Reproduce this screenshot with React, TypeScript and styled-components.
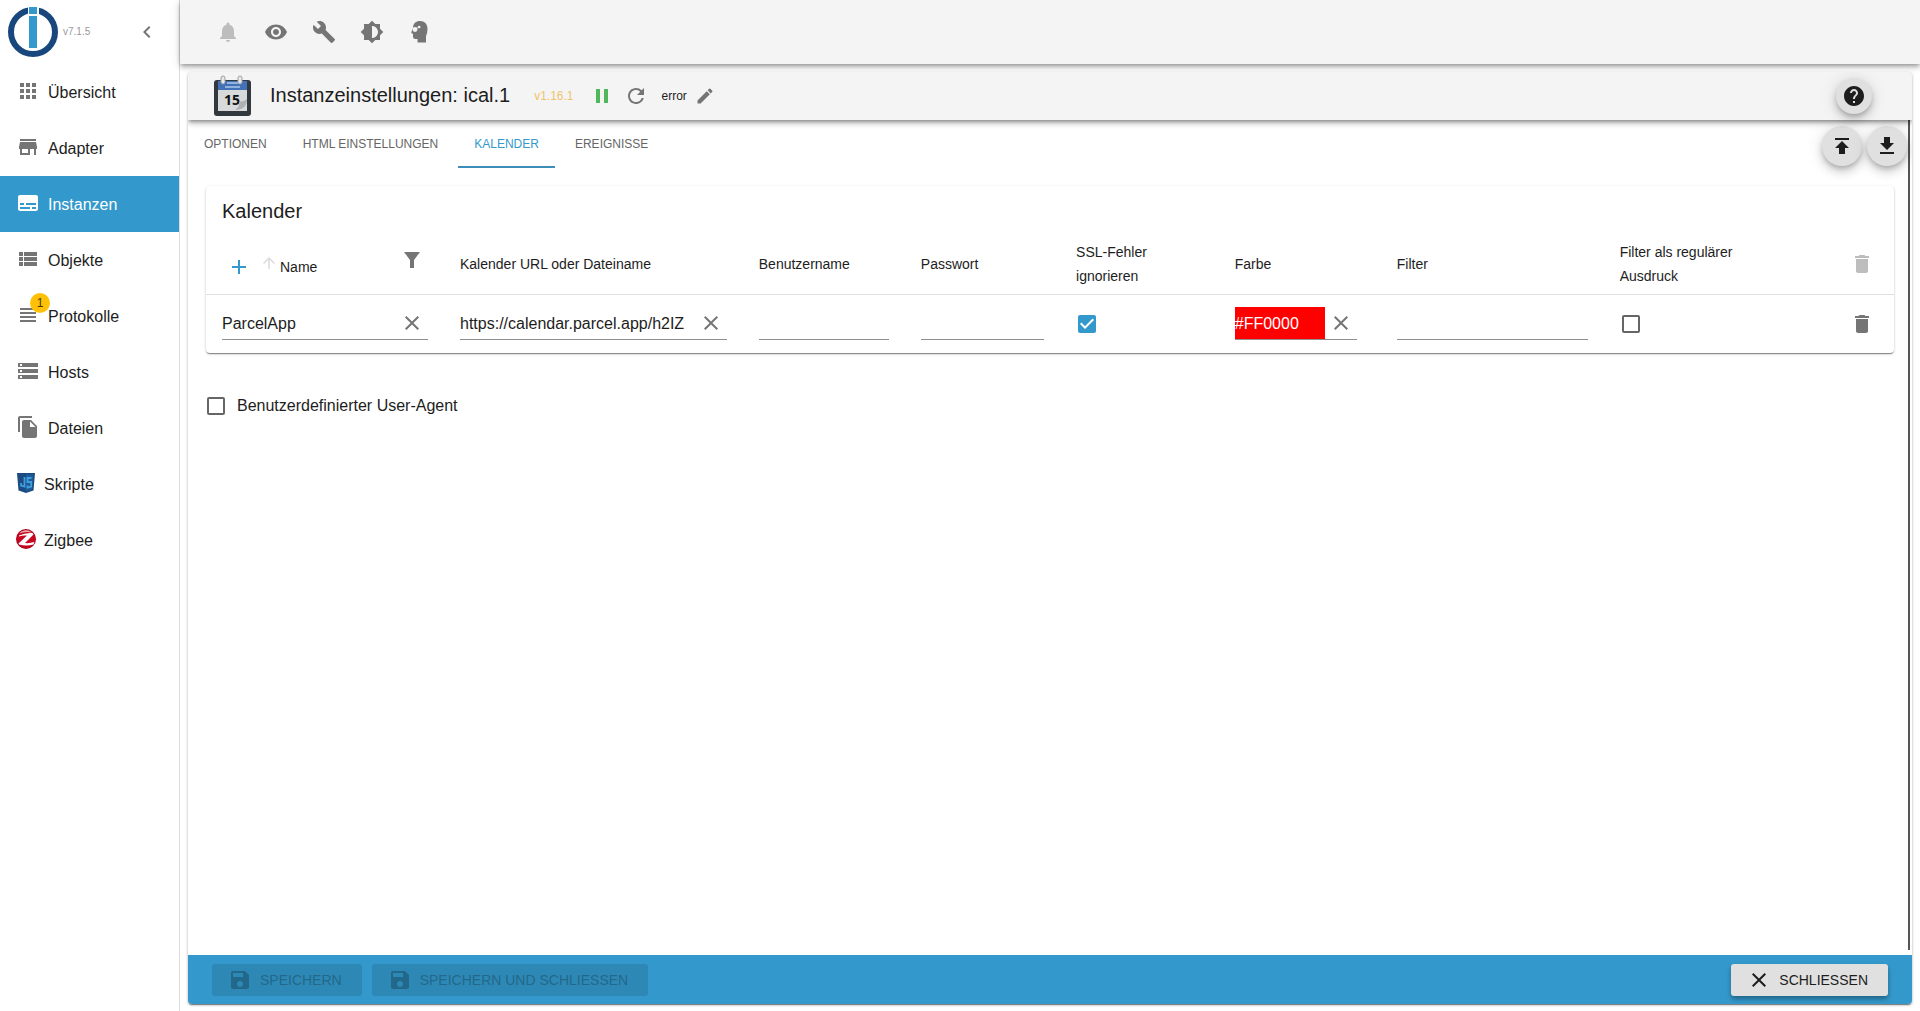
import React from 'react';
import styled, { createGlobalStyle } from 'styled-components';
import {
  MdApps, MdStore, MdSubtitles, MdViewList, MdViewHeadline, MdStorage, MdFileCopy,
  MdChevronLeft, MdNotifications, MdVisibility, MdBuild, MdBrightness6, MdPause, MdRefresh,
  MdEdit, MdHelp, MdPublish, MdGetApp, MdAdd, MdArrowUpward, MdClose, MdDelete, MdSave,
} from 'react-icons/md';

const Global = createGlobalStyle`
  *, *::before, *::after { box-sizing: border-box; }
  body { margin: 0; background: #fff; color: #1d1d1d; font: 16px/24px "Liberation Sans", Arial, sans-serif; }
  button, input { font: inherit; color: inherit; }
  button { border: 0; padding: 0; background: none; cursor: pointer; }
  svg { display: block; flex: none; }
`;

const Page = styled.div`
  display: flex;
  height: 100vh;
  min-height: 600px;
  overflow: hidden;
`;

const Sidebar = styled.aside`
  width: 180px;
  flex: none;
  border-right: 1px solid #dcdcdc;
`;
const Brand = styled.div`
  height: 64px;
  display: flex;
  align-items: center;
  padding: 0 20px 0 8px;
`;
const Version = styled.span`
  flex: 1;
  margin-left: 5px;
  font-size: 10px;
  color: #9a9a9a;
`;
const PlainButton = styled.button`
  display: inline-flex;
  align-items: center;
  justify-content: center;
  color: #757575;
  &:disabled { color: #bdbdbd; }
`;
const NavLink = styled.a<{ $active?: boolean }>`
  height: 56px;
  display: flex;
  align-items: center;
  gap: 8px;
  padding: 2px 0 0 16px;
  text-decoration: none;
  color: ${p => (p.$active ? '#fff' : '#1d1d1d')};
  background: ${p => (p.$active ? '#3399cc' : 'transparent')};
`;
const NavIcon = styled.span<{ $active?: boolean }>`
  position: relative;
  padding-bottom: 5px;
  color: ${p => (p.$active ? '#fff' : '#757575')};
`;
const Badge = styled.span`
  position: absolute;
  top: -10px;
  right: -10px;
  width: 20px;
  height: 20px;
  border-radius: 10px;
  background: #ffc107;
  color: #4a3a00;
  font-size: 12px;
  line-height: 20px;
  text-align: center;
`;

const Main = styled.main`
  flex: 1;
  min-width: 0;
  display: flex;
  flex-direction: column;
`;
const TopBar = styled.header`
  height: 64px;
  flex: none;
  display: flex;
  align-items: center;
  gap: 24px;
  padding-left: 36px;
  background: #f4f4f4;
  box-shadow: 0 2px 4px -1px rgba(0,0,0,.3), 0 4px 5px rgba(0,0,0,.14), 0 1px 10px rgba(0,0,0,.12);
`;
const Panel = styled.section`
  flex: 1;
  min-height: 0;
  margin: 8px 8px 7px;
  display: flex;
  flex-direction: column;
  border-radius: 4px;
  overflow: hidden;
  box-shadow: 0 2px 1px -1px rgba(0,0,0,.3), 0 1px 1px rgba(0,0,0,.14), 0 1px 3px rgba(0,0,0,.3);
`;
const PanelHead = styled.div`
  position: relative;
  height: 48px;
  flex: none;
  display: flex;
  align-items: center;
  padding: 0 40px 0 24px;
  background: #f4f4f4;
  box-shadow: 0 2px 4px -1px rgba(0,0,0,.4), 0 4px 5px rgba(0,0,0,.14), 0 1px 10px rgba(0,0,0,.12);
`;
const Title = styled.h1`
  margin: 0 24px 0 16px;
  padding-bottom: 2px;
  font-size: 20px;
  line-height: 32px;
  font-weight: 400;
`;
const InstanceVersion = styled.span`
  margin-right: 16px;
  font-size: 12px;
  color: #f0c46c;
`;
const HeadTools = styled.div`
  flex: 1;
  display: flex;
  align-items: center;
  gap: 10px;
`;
const LogLevel = styled.span`
  display: flex;
  align-items: center;
  gap: 8px;
  margin-left: 4px;
  font-size: 12px;
`;
const Fab = styled.button<{ $small?: boolean }>`
  width: ${p => (p.$small ? 36 : 40)}px;
  height: ${p => (p.$small ? 36 : 40)}px;
  border-radius: 50%;
  background: #e0e0e0;
  color: #1d1d1d;
  display: flex;
  align-items: center;
  justify-content: center;
  box-shadow: 0 3px 5px -1px rgba(0,0,0,.2), 0 6px 10px rgba(0,0,0,.14), 0 1px 18px rgba(0,0,0,.12);
`;

const Body = styled.div`
  flex: 1;
  min-height: 0;
  margin: 0 2px 5px 0;
  border-right: 2px solid #555;
`;
const TabRow = styled.div`
  display: flex;
  justify-content: space-between;
  height: 48px;
`;
const Tabs = styled.div`
  display: flex;
  gap: 4px;
`;
const Tab = styled.button<{ $active?: boolean }>`
  padding: 2px 16px 0;
  font-size: 12px;
  color: ${p => (p.$active ? '#3399cc' : '#666')};
  border-bottom: 2px solid ${p => (p.$active ? '#3d8fb9' : 'transparent')};
`;
const FabPair = styled.div`
  display: flex;
  align-items: center;
  gap: 5px;
  padding: 3px 1px 0 0;
`;
const Content = styled.div`
  padding: 18px 14px 0 18px;
`;
const Card = styled.section`
  border-radius: 4px;
  box-shadow: 0 2px 1px -1px rgba(0,0,0,.3), 0 1px 1px rgba(0,0,0,.14), 0 1px 3px rgba(0,0,0,.2);
`;
const CardTitle = styled.h2`
  margin: 0;
  padding: 9px 16px 7px;
  font-size: 20px;
  line-height: 32px;
  font-weight: 400;
`;
const Grid = styled.table`
  width: 100%;
  table-layout: fixed;
  border-collapse: collapse;
`;
const Col = styled.col<{ $w?: string }>`
  width: ${p => p.$w ?? 'auto'};
`;
const Th = styled.th`
  height: 60px;
  padding: 0 16px;
  text-align: left;
  font-size: 14px;
  line-height: 24px;
  font-weight: 400;
  border-bottom: 1px solid #e0e0e0;
  &:last-child { padding-right: 20px; }
`;
const Td = styled.td`
  height: 59px;
  padding: 0 16px;
  &:last-child { padding-right: 20px; }
`;
const NameHead = styled.div`
  display: flex;
  align-items: center;
  padding: 6px 0 0 5px;
`;
const NameLabel = styled.span`
  flex: 1;
  margin-left: 2px;
`;
const SortArrow = styled.span`
  margin: -8px 0 0 9px;
  color: #dadada;
`;
const FilterButton = styled(PlainButton)`
  margin: -14px 4px 0 0;
`;
const RightButton = styled(PlainButton)`
  display: flex;
  margin-left: auto;
`;
const Field = styled.div<{ $inset?: boolean }>`
  display: flex;
  align-items: center;
  height: 33px;
  margin-right: ${p => (p.$inset ? 8 : 0)}px;
  border-bottom: 1px solid #8f8f8f;
`;
const Input = styled.input<{ $fill?: string }>`
  flex: 1;
  min-width: 0;
  height: 32px;
  border: 0;
  outline: 0;
  padding: 1px 0 0;
  background: ${p => p.$fill ?? 'transparent'};
  color: ${p => (p.$fill ? '#fff' : 'inherit')};
`;
const ClearButton = styled(PlainButton)<{ $snug?: boolean }>`
  padding: ${p => (p.$snug ? '0 4px' : '0 4px 0 14px')};
`;
const Check = styled.input`
  appearance: none;
  display: block;
  flex: none;
  width: 18px;
  height: 18px;
  margin: 0;
  border: 2px solid #666;
  border-radius: 2px;
  background-color: transparent;
  ${Td} & { margin: 0 2px; }
  &:checked {
    border-color: #3399cc;
    background: #3399cc url("data:image/svg+xml,%3Csvg xmlns='http://www.w3.org/2000/svg' viewBox='3 3 18 18'%3E%3Cpath fill='white' d='M10 17l-5-5 1.41-1.41L10 14.17l7.59-7.59L19 8z'/%3E%3C/svg%3E") center / 18px 18px no-repeat;
  }
`;
const AgentLabel = styled.label`
  display: flex;
  align-items: center;
  gap: 12px;
  padding: 41px 0 0 1px;
`;

const Footer = styled.footer`
  height: 49px;
  flex: none;
  display: flex;
  align-items: center;
  gap: 10px;
  padding: 0 24px;
  background: #3399cc;
`;
const FooterButton = styled.button`
  height: 32px;
  display: flex;
  align-items: center;
  gap: 8px;
  padding: 0 20px 0 16px;
  border-radius: 3px;
  font-size: 14px;
  background: #e0e0e0;
  color: #1d1d1d;
  box-shadow: 0 3px 5px rgba(0,0,0,.35);
  &:disabled { background: #2e88b5; color: #22688b; box-shadow: none; }
`;
const Spacer = styled.span`
  flex: 1;
`;

const Logo = () => (
  <svg width="50" height="50" viewBox="0 0 50 50" aria-hidden="true">
    <circle cx="25" cy="25" r="22" fill="none" stroke="#17477c" strokeWidth="6" />
    <rect x="20" y="0" width="11" height="10" fill="#fff" />
    <rect x="21" y="0" width="8" height="7" fill="#3399cc" />
    <rect x="21" y="9" width="8" height="32" fill="#3399cc" />
  </svg>
);

const HeadIcon = () => (
  <svg width="24" height="24" viewBox="0 0 24 24" aria-hidden="true">
    <path fill="currentColor" d="M12 1C8 1 5 3.500 5 8L3.200 12.500Q3 13.500 5 13.700V17Q5 19 7.500 19H9.500V22.500H18V16Q19.500 13 19.500 8.500C19.500 4 16.500 1 12 1Z" />
    <path d="M7 9.500L11 7" stroke="#f4f4f4" strokeWidth="1" />
    <circle cx="7" cy="9.500" r="2.400" fill="#f4f4f4" />
    <circle cx="11.200" cy="7" r="1.300" fill="#f4f4f4" />
  </svg>
);

const Funnel = () => (
  <svg width="24" height="24" viewBox="0 0 24 24" fill="currentColor" aria-hidden="true">
    <path d="M4 4h16l-6 8v8h-4v-8z" />
  </svg>
);

const CalendarIcon = () => (
  <svg width="42" height="42" viewBox="0 0 42 42" aria-hidden="true">
    <rect x="2" y="5" width="37" height="36" rx="3" fill="#31393e" />
    <rect x="6" y="6" width="29" height="30" fill="#d8d9db" />
    <rect x="6" y="6" width="29" height="9" fill="#4271b7" />
    <path d="M15 8h12M13 12h15" stroke="#8fb2df" strokeWidth="2" />
    <rect x="9" y="1" width="4" height="8" rx="2" fill="#e7e8e9" stroke="#9aa0a4" />
    <rect x="26" y="1" width="4" height="8" rx="2" fill="#e7e8e9" stroke="#9aa0a4" />
    <text x="20" y="30" textAnchor="middle" fontFamily="Open Sans, sans-serif" fontWeight="700" fontSize="14" fill="#111">15</text>
    <path d="M35 24C32 27 28 26 27 27C28 30 26 33 23 35C31 35 35 31 35 24Z" fill="#aeb1b4" />
  </svg>
);

const JsIcon = () => (
  <svg width="20" height="20" viewBox="0 0 20 20" aria-hidden="true">
    <path d="M1 0h18l-1.500 17.500L10 20l-7.500-2.500z" fill="#1b4b80" />
    <path d="M10 1.500h7.300l-1.200 14.700L10 18.200z" fill="#1f5c97" />
    <path d="M8.500 4v9.500L5 12.500V10M15.500 5H11.500V9h3.700v4.500l-3.700 1V12.500" fill="none" stroke="#3fa0e0" strokeWidth="1.800" />
  </svg>
);

const ZigbeeIcon = () => (
  <svg width="20" height="20" viewBox="0 0 20 20" aria-hidden="true">
    <circle cx="10" cy="10" r="10" fill="#a80018" />
    <circle cx="10" cy="10" r="9" fill="#c8061f" />
    <path d="M3 4.500a9 9 0 0 1 13-1Q9 2 3 4.500Z" fill="#e8a6ae" />
    <path d="M3 6.500Q9 3.500 16.500 4L17.500 5.500L9 14Q13 14.500 18.500 13L17.500 15.500Q10 17.500 3 15.500L2.500 14.500L11 6.500Q7 6 3 7.500Z" fill="#fff" />
  </svg>
);

const nav = [
  { label: 'Übersicht', icon: <MdApps size={24} /> },
  { label: 'Adapter', icon: <MdStore size={24} /> },
  { label: 'Instanzen', icon: <MdSubtitles size={24} />, active: true },
  { label: 'Objekte', icon: <MdViewList size={24} /> },
  { label: 'Protokolle', icon: <MdViewHeadline size={24} />, badge: 1 },
  { label: 'Hosts', icon: <MdStorage size={24} /> },
  { label: 'Dateien', icon: <MdFileCopy size={24} /> },
  { label: 'Skripte', icon: <JsIcon /> },
  { label: 'Zigbee', icon: <ZigbeeIcon /> },
];

const tabs = ['OPTIONEN', 'HTML EINSTELLUNGEN', 'KALENDER', 'EREIGNISSE'];
const columns = ['14.1%', '17.7%', '9.6%', '9.2%', '9.4%', '9.6%', '13.2%', '11%', undefined];

export default function App() {
  return (
    <Page>
      <Global />
      <Sidebar>
        <Brand>
          <Logo />
          <Version>v7.1.5</Version>
          <PlainButton aria-label="Menü einklappen"><MdChevronLeft size={24} /></PlainButton>
        </Brand>
        <nav>
          {nav.map(n => (
            <NavLink key={n.label} href="#" $active={n.active}>
              <NavIcon $active={n.active}>
                {n.icon}
                {n.badge && <Badge>{n.badge}</Badge>}
              </NavIcon>
              {n.label}
            </NavLink>
          ))}
        </nav>
      </Sidebar>
      <Main>
        <TopBar>
          <PlainButton disabled aria-label="Benachrichtigungen"><MdNotifications size={24} /></PlainButton>
          <PlainButton aria-label="Sichtbarkeit"><MdVisibility size={24} /></PlainButton>
          <PlainButton aria-label="Systemeinstellungen"><MdBuild size={24} /></PlainButton>
          <PlainButton aria-label="Farbschema"><MdBrightness6 size={24} /></PlainButton>
          <PlainButton aria-label="Expertenmodus"><HeadIcon /></PlainButton>
        </TopBar>
        <Panel>
          <PanelHead>
            <CalendarIcon />
            <Title>Instanzeinstellungen: ical.1</Title>
            <InstanceVersion>v1.16.1</InstanceVersion>
            <HeadTools>
              <PlainButton aria-label="Pause"><MdPause size={24} color="#4fb85a" /></PlainButton>
              <PlainButton aria-label="Neu starten"><MdRefresh size={24} /></PlainButton>
              <LogLevel>
                error
                <PlainButton aria-label="Loglevel bearbeiten"><MdEdit size={20} /></PlainButton>
              </LogLevel>
            </HeadTools>
            <Fab $small aria-label="Hilfe"><MdHelp size={24} /></Fab>
          </PanelHead>
          <Body>
            <TabRow>
              <Tabs role="tablist">
                {tabs.map(t => (
                  <Tab key={t} role="tab" aria-selected={t === 'KALENDER'} $active={t === 'KALENDER'}>{t}</Tab>
                ))}
              </Tabs>
              <FabPair>
                <Fab aria-label="Importieren"><MdPublish size={24} /></Fab>
                <Fab aria-label="Exportieren"><MdGetApp size={24} /></Fab>
              </FabPair>
            </TabRow>
            <Content>
              <Card>
                <CardTitle>Kalender</CardTitle>
                <Grid>
                  <colgroup>{columns.map((w, i) => <Col key={i} $w={w} />)}</colgroup>
                  <thead>
                    <tr>
                      <Th>
                        <NameHead>
                          <PlainButton aria-label="Hinzufügen"><MdAdd size={24} color="#3399cc" /></PlainButton>
                          <SortArrow><MdArrowUpward size={18} /></SortArrow>
                          <NameLabel>Name</NameLabel>
                          <FilterButton aria-label="Namen filtern"><Funnel /></FilterButton>
                        </NameHead>
                      </Th>
                      <Th>Kalender URL oder Dateiname</Th>
                      <Th>Benutzername</Th>
                      <Th>Passwort</Th>
                      <Th>SSL-Fehler ignorieren</Th>
                      <Th>Farbe</Th>
                      <Th>Filter</Th>
                      <Th>Filter als regulärer Ausdruck</Th>
                      <Th><RightButton disabled aria-label="Alle löschen"><MdDelete size={24} /></RightButton></Th>
                    </tr>
                  </thead>
                  <tbody>
                    <tr>
                      <Td><Field><Input aria-label="Name" defaultValue="ParcelApp" /><ClearButton aria-label="Name leeren"><MdClose size={24} /></ClearButton></Field></Td>
                      <Td><Field><Input aria-label="Kalender URL oder Dateiname" defaultValue="https://calendar.parcel.app/h2IZ" /><ClearButton aria-label="URL leeren"><MdClose size={24} /></ClearButton></Field></Td>
                      <Td><Field><Input aria-label="Benutzername" /></Field></Td>
                      <Td><Field><Input aria-label="Passwort" type="password" /></Field></Td>
                      <Td><Check type="checkbox" defaultChecked aria-label="SSL-Fehler ignorieren" /></Td>
                      <Td><Field $inset><Input aria-label="Farbe" $fill="#ff0000" defaultValue="#FF0000" /><ClearButton $snug aria-label="Farbe leeren"><MdClose size={24} /></ClearButton></Field></Td>
                      <Td><Field><Input aria-label="Filter" /></Field></Td>
                      <Td><Check type="checkbox" aria-label="Filter als regulärer Ausdruck" /></Td>
                      <Td><RightButton aria-label="Löschen"><MdDelete size={24} /></RightButton></Td>
                    </tr>
                  </tbody>
                </Grid>
              </Card>
              <AgentLabel><Check type="checkbox" />Benutzerdefinierter User-Agent</AgentLabel>
            </Content>
          </Body>
          <Footer>
            <FooterButton disabled><MdSave size={24} />SPEICHERN</FooterButton>
            <FooterButton disabled><MdSave size={24} />SPEICHERN UND SCHLIESSEN</FooterButton>
            <Spacer />
            <FooterButton><MdClose size={24} />SCHLIESSEN</FooterButton>
          </Footer>
        </Panel>
      </Main>
    </Page>
  );
}
